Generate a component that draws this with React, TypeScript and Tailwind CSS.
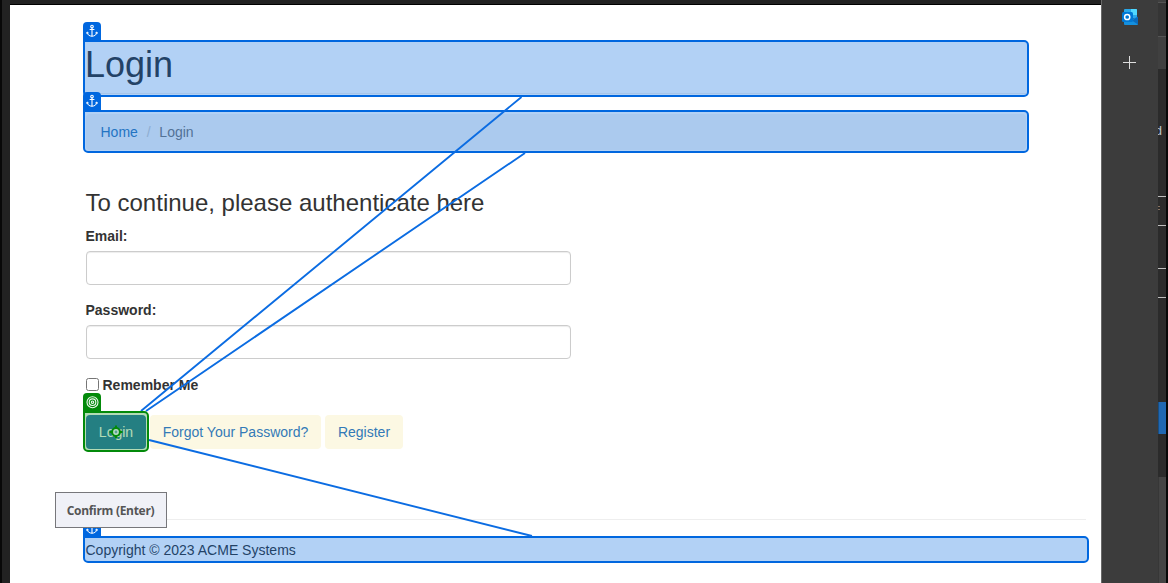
import React from "react";

function AnchorIcon() {
  return (
    <svg width="12" height="14" viewBox="0 0 12 14" fill="none" stroke="white" strokeWidth="1.1">
      <circle cx="6" cy="2.6" r="1.3" />
      <path d="M6 4v8.4M3.6 5.5h4.8" />
      <path d="M1.2 8.2c.2 2.6 2.2 4 4.8 4s4.600-1.400 4.800-4M.5 9.500 1.200 8l1.500 1.100M9.300 9.100 10.800 8l.7 1.500" strokeWidth="1" />
    </svg>
  );
}

function AnchorTab({ place }: { place: string }) {
  return (
    <div className={`absolute flex h-[19px] w-[18px] justify-center rounded-t-[4px] bg-[#0067df] pt-[2px] ${place}`}>
      <AnchorIcon />
    </div>
  );
}

function Highlight({ place }: { place: string }) {
  return <div className={`absolute rounded-r-[5px] rounded-bl-[5px] border-2 border-[#0067df] bg-[#0067df]/30 ${place}`} />;
}

function Overlay() {
  return (
    <div className="pointer-events-none absolute inset-0">
      <Highlight place="left-[83px] top-[40px] w-[946px] h-[57px]" />
      <Highlight place="left-[83px] top-[110px] w-[946px] h-[43px]" />
      <Highlight place="left-[83px] top-[536px] w-[1006px] h-[27px]" />
      <AnchorTab place="left-[83px] top-[22px]" />
      <AnchorTab place="left-[83px] top-[92px]" />
      <AnchorTab place="left-[83px] top-[519px]" />
      <svg className="absolute left-0 top-0" width="1168" height="583" fill="none" stroke="#0b6ce2" strokeWidth="1.9">
        <path d="M521.5 97 141 411M525 153 146 411M149 440 532 536" />
      </svg>
      <div className="absolute left-[83px] top-[393px] flex h-[19px] w-[18px] justify-center rounded-t-[4px] bg-[#038a0a] pt-[3px]">
        <svg width="13" height="13" viewBox="0 0 13 13" fill="none" stroke="#f0faf0" strokeWidth="1.1">
          <circle cx="6.5" cy="6.2" r="5.5" />
          <circle cx="6.5" cy="6.2" r="3.3" />
          <circle cx="6.5" cy="6.2" r="1.2" />
        </svg>
      </div>
      <div className="absolute left-[83px] top-[411px] h-[41px] w-[66px] rounded-r-[5px] rounded-bl-[5px] border-2 border-[#038a0a] bg-[#038a0a]/30" />
      <svg className="absolute left-[109px] top-[425px]" width="14" height="14" viewBox="0 0 14 14">
        <path d="M7 .5v13M.5 7h13" stroke="#038a0a" strokeWidth="2" />
        <circle cx="7" cy="7" r="3.9" fill="#b9dcc8" stroke="#038a0a" strokeWidth="2" />
        <circle cx="7" cy="7" r="1.4" fill="#5b9f94" />
      </svg>
      <div className="absolute left-[55px] top-[492px] flex h-[36px] w-[112px] items-center justify-center border border-[#77777b] bg-[#f0f1f7] pr-px pt-[2px] font-['Open_Sans',sans-serif] text-[12px] font-bold tracking-[-0.3px] text-[#555555]">
        Confirm (Enter)
      </div>
    </div>
  );
}

function Field({ label }: { label: string }) {
  return (
    <label className="mb-[15px] block font-bold">
      {label}
      <input className="mt-[5px] block h-[34px] w-[485px] rounded-[4px] border border-[#cccccc] bg-white shadow-[inset_0_1px_1px_rgba(0,0,0,0.075)]" />
    </label>
  );
}

function LoginPage() {
  return (
    <main className="h-[578px] w-[1091px] bg-white pl-[76px] pt-[39px] -indent-[0.5px]">
      <header className="h-[50px] w-[940px] border-b border-[#eeeeee]">
        <h1 className="pt-px text-[36px] leading-[40px] -indent-[1px]">Login</h1>
      </header>
      <nav className="mt-[20px] flex h-[36px] w-[940px] items-center rounded-[4px] bg-[#f5f5f5] pl-[15px]">
        <a className="text-[#337ab7]">Home</a>
        <span className="w-[22px] text-center text-[#cccccc]">/</span>
        <span className="text-[#777777]">Login</span>
      </nav>
      <h3 className="mt-[40px] text-[24px] leading-[26px]">To continue, please authenticate here</h3>
      <form className="mt-[10px]">
        <Field label="Email:" />
        <Field label="Password:" />
        <label className="mt-[16px] flex h-[20px] items-center font-bold">
          <span className="mb-[2px] mr-[4px] size-[13px] rounded-[2.5px] border border-[#767676] bg-white" />
          Remember Me
        </label>
        <div className="mt-[20px] flex h-[34px] gap-[4px] text-[#337ab7] indent-0">
          <button type="button" className="w-[60px] rounded-[4px] bg-[#337ab7] text-white">Login</button>
          <button type="button" className="w-[171px] rounded-[4px] bg-[#fcf8e3]">Forgot Your Password?</button>
          <button type="button" className="w-[78px] rounded-[4px] bg-[#fcf8e3]">Register</button>
        </div>
      </form>
      <hr className="mt-[70px] w-[1000px] border-[#eeeeee]" />
      <footer className="mt-[20px]">Copyright © 2023 ACME Systems</footer>
    </main>
  );
}

function Sidebar() {
  return (
    <aside className="flex w-[57px] flex-col items-center border-l border-[#696969] bg-[#3c3c3c] pt-[9px]">
      <svg width="16" height="16" viewBox="0 0 16 16">
        <path d="M2 1q0-1 1-1h11q1 0 1 1v8H2z" fill="#28a8ea" />
        <path d="M9 0h5q1 0 1 1v5H9z" fill="#50d9ff" />
        <path d="M16 8v7q0 1-1 1H3q-1 0-1-1v-3z" fill="#1490df" />
        <path d="m10 11.500 6-4v8z" fill="#0a6bbd" />
        <rect x="0" y="3" width="11" height="10" rx="1.500" fill="#0078d4" />
        <circle cx="5.200" cy="8" r="2.600" fill="none" stroke="white" strokeWidth="1.500" />
      </svg>
      <svg className="mr-px mt-[31px]" width="13" height="13" viewBox="0 0 13 13" stroke="#dedede">
        <path d="M6.5 0v13M0 6.5h13" />
      </svg>
    </aside>
  );
}

function EdgeStrip() {
  return (
    <div className="flex w-[10px] flex-col overflow-hidden border-r-2 border-[#080808] bg-[#2b2b2b]">
      <div className="h-[69px] shrink-0 bg-[#404040] pt-[2px]">
        <div className="h-[35px] border-y border-[#545454] bg-[#353535]" />
      </div>
      <div className="flex h-[127px] shrink-0 justify-end overflow-hidden pr-[4px] pt-[52px] text-[13px] leading-[20px] text-[#b8c6cf]">d</div>
      <div className="h-[30px] shrink-0 border-y border-[#bdbdbd] pt-[9px]">
        <div className="h-[4px] w-[2px] border-y border-[#86705e]" />
      </div>
      <div className="mt-[42px] h-[30px] shrink-0 border-y border-[#bdbdbd]" />
      <div className="mt-[104px] h-[32px] shrink-0 border-l border-[#174e83] bg-[#2068b3]" />
      <div className="mt-[43px] grow border-l border-[#373737] bg-[#444444]" />
    </div>
  );
}

export default function App() {
  return (
    <div className="relative flex h-[583px] w-[1168px] overflow-hidden bg-[#222222] font-['Liberation_Sans',Arial,sans-serif] text-[14px] leading-[20px] text-[#333333]">
      <div className="w-[10px] border-l-2 border-[#080808]" />
      <div className="w-[1091px]">
        <div className="h-[5px] border-b border-black" />
        <LoginPage />
      </div>
      <Sidebar />
      <EdgeStrip />
      <Overlay />
    </div>
  );
}
